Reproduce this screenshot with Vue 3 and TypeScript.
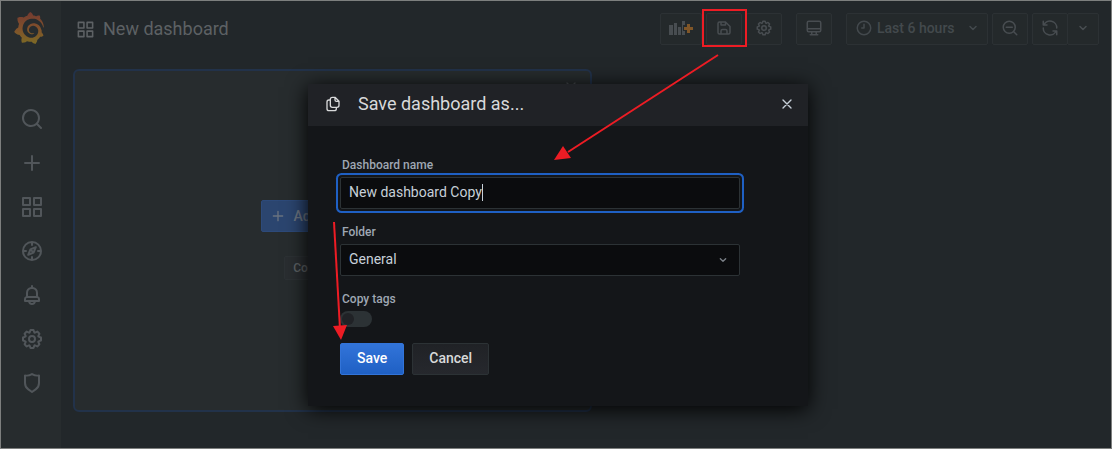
<script setup lang="ts">
import { h, ref, type FunctionalComponent } from 'vue'

interface Glyph {
  d: string
  line?: boolean
}

const glyphs: Record<string, Glyph> = {
  apps: { d: 'M10,13H3a1,1,0,0,0-1,1v7a1,1,0,0,0,1,1h7a1,1,0,0,0,1-1V14A1,1,0,0,0,10,13ZM9,20H4V15H9ZM21,2H14a1,1,0,0,0-1,1v7a1,1,0,0,0,1,1h7a1,1,0,0,0,1-1V3A1,1,0,0,0,21,2ZM20,9H15V4h5Zm1,4H14a1,1,0,0,0-1,1v7a1,1,0,0,0,1,1h7a1,1,0,0,0,1-1V14A1,1,0,0,0,21,13Zm-1,7H15V15h5ZM10,2H3A1,1,0,0,0,2,3v7a1,1,0,0,0,1,1h7a1,1,0,0,0,1-1V3A1,1,0,0,0,10,2ZM9,9H4V4H9Z' },
  search: { d: 'M21.71,20.29,18,16.61A9,9,0,1,0,16.61,18l3.68,3.68a1,1,0,0,0,1.42,0A1,1,0,0,0,21.71,20.29ZM11,18a7,7,0,1,1,7-7A7,7,0,0,1,11,18Z' },
  plus: { d: 'M19,11H13V5a1,1,0,0,0-2,0v6H5a1,1,0,0,0,0,2h6v6a1,1,0,0,0,2,0V13h6a1,1,0,0,0,0-2Z' },
  compass: { d: 'M12 3a9 9 0 1 0 0 18 9 9 0 0 0 0-18ZM12 3v3M12 18v3M3 12h3M18 12h3M15.8 8.2l-5.4 2.2-2.2 5.4 5.4-2.2ZM10.6 10.6l2.8 2.8', line: true },
  bell: { d: 'M18,13.18V10a6,6,0,0,0-5-5.91V3a1,1,0,0,0-2,0V4.09A6,6,0,0,0,6,10v3.18A3,3,0,0,0,4,16v2a1,1,0,0,0,1,1H8.14a4,4,0,0,0,7.72,0H19a1,1,0,0,0,1-1V16A3,3,0,0,0,18,13.18ZM8,10a4,4,0,0,1,8,0v3H8Zm4,10a2,2,0,0,1-1.72-1h3.44A2,2,0,0,1,12,20Zm6-3H6V16a1,1,0,0,1,1-1H17a1,1,0,0,1,1,1Z' },
  cog: { d: 'M21.32,9.55l-1.89-.63.89-1.78A1,1,0,0,0,20.13,6L18,3.87a1,1,0,0,0-1.15-.19l-1.78.89-.63-1.89A1,1,0,0,0,13.5,2h-3a1,1,0,0,0-.95.68L8.92,4.57,7.14,3.68A1,1,0,0,0,6,3.87L3.87,6a1,1,0,0,0-.19,1.15l.89,1.78-1.89.63A1,1,0,0,0,2,10.5v3a1,1,0,0,0,.68.95l1.89.63-.89,1.78A1,1,0,0,0,3.87,18L6,20.13a1,1,0,0,0,1.15.19l1.78-.89.63,1.89a1,1,0,0,0,.95.68h3a1,1,0,0,0,.95-.68l.63-1.89,1.78.89A1,1,0,0,0,18,20.13L20.13,18a1,1,0,0,0,.19-1.15l-.89-1.78,1.89-.63A1,1,0,0,0,22,13.5v-3A1,1,0,0,0,21.32,9.55ZM20,12.78l-1.2.4A2,2,0,0,0,17.64,16l.57,1.14-1.1,1.1L16,17.64a2,2,0,0,0-2.79,1.16l-.4,1.2H11.22l-.4-1.2A2,2,0,0,0,8,17.64l-1.14.57-1.1-1.1L6.36,16A2,2,0,0,0,5.2,13.18L4,12.78V11.22l1.2-.4A2,2,0,0,0,6.36,8L5.79,6.89l1.1-1.1L8,6.36A2,2,0,0,0,10.82,5.2l.4-1.2h1.56l.4,1.2A2,2,0,0,0,16,6.36l1.14-.57,1.1,1.1L17.64,8a2,2,0,0,0,1.16,2.79l1.2.4ZM12,8a4,4,0,1,0,4,4A4,4,0,0,0,12,8Zm0,6a2,2,0,1,1,2-2A2,2,0,0,1,12,14Z' },
  shield: { d: 'M19.63,3.65a1,1,0,0,0-.84-.2,8,8,0,0,1-6.22-1.27,1,1,0,0,0-1.14,0A8,8,0,0,1,5.21,3.45a1,1,0,0,0-.84.2A1,1,0,0,0,4,4.43v7.45a9,9,0,0,0,3.77,7.33l3.65,2.6a1,1,0,0,0,1.16,0l3.65-2.6A9,9,0,0,0,20,11.88V4.43A1,1,0,0,0,19.63,3.65ZM18,11.88a7,7,0,0,1-2.93,5.7L12,19.77,8.93,17.58A7,7,0,0,1,6,11.88V5.58a10,10,0,0,0,6-1.39,10,10,0,0,0,6,1.39Z' },
  save: { d: 'M20.71,9.29l-6-6a1,1,0,0,0-.32-.21A1.09,1.09,0,0,0,14,3H6A3,3,0,0,0,3,6V18a3,3,0,0,0,3,3H18a3,3,0,0,0,3-3V10A1,1,0,0,0,20.71,9.29ZM9,5h4V7H9Zm6,14H9V16a1,1,0,0,1,1-1h4a1,1,0,0,1,1,1Zm4-1a1,1,0,0,1-1,1H17V16a3,3,0,0,0-3-3H10a3,3,0,0,0-3,3v3H6a1,1,0,0,1-1-1V6A1,1,0,0,1,6,5H7V8A1,1,0,0,0,8,9h6a1,1,0,0,0,1-1V6.41l4,4Z' },
  monitor: { d: 'M5 3h14a2 2 0 0 1 2 2v10a2 2 0 0 1-2 2H5a2 2 0 0 1-2-2V5a2 2 0 0 1 2-2ZM3 13h18M9 17v4M15 17v4M7 21h10', line: true },
  clock: { d: 'M12 3a9 9 0 1 0 0 18 9 9 0 0 0 0-18ZM12 7v5H9', line: true },
  zoomOut: { d: 'M11 3a8 8 0 1 0 0 16 8 8 0 0 0 0-16ZM17 17l4 4M7 11h8', line: true },
  sync: { d: 'M3 3v5h5M3.800 8A9 9 0 0 1 21 12M21 21v-5h-5M20.200 16A9 9 0 0 1 3 12', line: true },
  down: { d: 'M8 10l4 4 4-4', line: true },
  times: { d: 'M6 6l12 12M18 6l-12 12', line: true },
  copy: { d: 'M15 2H11a3 3 0 0 0-3 3v9a3 3 0 0 0 3 3h7a3 3 0 0 0 3-3V8ZM15 2v4a2 2 0 0 0 2 2h4M8 6H6a3 3 0 0 0-3 3v10a3 3 0 0 0 3 3h8a3 3 0 0 0 3-3v-2', line: true },
}

const Icon: FunctionalComponent<{ name: string; size: number }> = (props) => {
  const glyph = glyphs[props.name]
  return h(
    'svg',
    { width: props.size, height: props.size, viewBox: '0 0 24 24', 'aria-hidden': 'true' },
    [
      h('path', {
        d: glyph.d,
        fill: glyph.line ? 'none' : 'currentColor',
        stroke: glyph.line ? 'currentColor' : 'none',
        'stroke-width': 2,
        'stroke-linecap': 'round',
        'stroke-linejoin': 'round',
      }),
    ],
  )
}
Icon.props = ['name', 'size']

const navItems = [
  { icon: 'search', label: 'Search' },
  { icon: 'plus', label: 'Create' },
  { icon: 'apps', label: 'Dashboards' },
  { icon: 'compass', label: 'Explore' },
  { icon: 'bell', label: 'Alerting' },
  { icon: 'cog', label: 'Configuration' },
  { icon: 'shield', label: 'Server Admin' },
]

const dashboardName = ref('New dashboard Copy')
const folder = ref('General')
const copyTags = ref(false)
</script>

<template>
  <div class="app">
    <nav class="sidebar" aria-label="Main">
      <a class="logo" href="#" aria-label="Grafana">
        <svg width="32" height="32" viewBox="0 0 24 24" aria-hidden="true">
          <defs>
            <linearGradient id="flame" x1="0" y1="1" x2="0" y2="0">
              <stop offset="0" stop-color="#7c6a25" />
              <stop offset="0.500" stop-color="#80502b" />
              <stop offset="1" stop-color="#733a30" />
            </linearGradient>
          </defs>
          <path fill="url(#flame)" d="M23.02 10.59a8.578 8.578 0 0 0-.862-3.034 8.911 8.911 0 0 0-1.789-2.445c.337-1.342-.413-2.505-.413-2.505-1.292-.08-2.113.4-2.416.62-.052-.02-.102-.044-.154-.064-.22-.089-.446-.172-.677-.247-.231-.073-.47-.14-.711-.197a9.867 9.867 0 0 0-.875-.161C14.557.753 12.94 0 12.94 0c-1.804 1.145-2.147 2.744-2.147 2.744l-.018.093c-.098.029-.2.057-.298.088-.138.042-.275.094-.413.143-.138.055-.275.107-.41.166a8.869 8.869 0 0 0-1.557.87l-.063-.029c-2.497-.955-4.716.195-4.716.195-.203 2.658.996 4.33 1.235 4.636a11.608 11.608 0 0 0-.607 2.635C1.636 12.677.953 15.014.953 15.014c1.926 2.214 4.171 2.351 4.171 2.351.003-.002.006-.002.006-.005.285.509.615.994.986 1.446.156.19.32.371.488.548-.704 2.009.099 3.68.099 3.68 2.144.08 3.553-.937 3.849-1.173a9.784 9.784 0 0 0 3.164.501h.08l.055-.003.107-.002.103-.005.003.002c1.01 1.44 2.788 1.646 2.788 1.646 1.264-1.332 1.337-2.653 1.337-2.94v-.058c0-.02-.003-.039-.003-.06.265-.187.52-.387.758-.6a7.875 7.875 0 0 0 1.415-1.7c1.43.083 2.437-.885 2.437-.885-.236-1.49-1.085-2.216-1.264-2.354l-.018-.013-.016-.013a.217.217 0 0 1-.031-.02c.008-.092.016-.18.02-.27.011-.162.016-.323.016-.48v-.253l-.005-.098-.008-.135a1.891 1.891 0 0 0-.01-.13c-.003-.042-.008-.083-.013-.125l-.016-.124-.018-.122a6.215 6.215 0 0 0-2.032-3.73 6.015 6.015 0 0 0-3.222-1.46 6.292 6.292 0 0 0-.85-.048l-.107.002h-.063l-.044.003-.104.008a4.777 4.777 0 0 0-3.335 1.695c-.332.4-.592.84-.768 1.297a4.594 4.594 0 0 0-.312 1.817l.003.091c.005.055.007.11.013.164a3.615 3.615 0 0 0 .698 1.82 3.53 3.53 0 0 0 1.827 1.282c.33.098.66.14.971.137.039 0 .078 0 .114-.002l.063-.003c.02 0 .041-.003.062-.003.034-.002.065-.007.099-.01.007 0 .018-.003.028-.003l.031-.005.06-.008a1.18 1.18 0 0 0 .112-.02c.036-.008.072-.013.109-.024a2.634 2.634 0 0 0 .914-.415c.028-.02.056-.041.085-.065a.248.248 0 0 0 .039-.35.244.244 0 0 0-.309-.06l-.078.042c-.09.044-.184.083-.283.116a2.476 2.476 0 0 1-.475.096c-.028.003-.054.006-.083.006l-.083.002c-.026 0-.054 0-.08-.002l-.102-.006h-.012l-.024.006c-.016-.003-.031-.003-.044-.006-.031-.002-.06-.007-.091-.01a2.59 2.59 0 0 1-.724-.213 2.557 2.557 0 0 1-.667-.438 2.52 2.52 0 0 1-.805-1.475 2.306 2.306 0 0 1-.029-.444l.006-.122v-.023l.002-.031c.003-.021.003-.04.005-.06a3.163 3.163 0 0 1 1.352-2.29 3.12 3.12 0 0 1 .937-.43 2.946 2.946 0 0 1 .776-.101h.06l.07.002.045.003h.026l.07.005a4.041 4.041 0 0 1 1.635.49 3.94 3.94 0 0 1 1.602 1.662 3.77 3.77 0 0 1 .397 1.414l.005.076.003.075c.002.026.002.05.002.075 0 .024.003.052 0 .07v.065l-.002.073-.008.174a6.195 6.195 0 0 1-.08.639 5.1 5.1 0 0 1-.267.927 5.31 5.31 0 0 1-.624 1.13 5.052 5.052 0 0 1-3.237 2.014 4.82 4.82 0 0 1-.649.066l-.039.003h-.287a6.607 6.607 0 0 1-1.716-.265 6.776 6.776 0 0 1-3.4-2.274 6.75 6.75 0 0 1-.746-1.15 6.616 6.616 0 0 1-.714-2.596l-.005-.083-.002-.02v-.056l-.003-.073v-.096l-.003-.104v-.07l.003-.163c.008-.22.026-.45.054-.678a8.707 8.707 0 0 1 .28-1.355c.128-.444.286-.872.473-1.277a7.04 7.04 0 0 1 1.456-2.1 5.925 5.925 0 0 1 .953-.763c.169-.111.343-.213.524-.306.089-.05.182-.091.273-.135.047-.02.093-.042.138-.062a7.177 7.177 0 0 1 .714-.267l.145-.045c.049-.015.098-.026.148-.041.098-.029.197-.052.296-.076.049-.013.1-.02.15-.033l.15-.032.151-.028.076-.013.075-.01.153-.024c.057-.01.114-.013.171-.023l.169-.021c.036-.003.073-.008.106-.01l.073-.008.036-.003.042-.002c.057-.003.114-.008.171-.01l.086-.006h.023l.037-.003.145-.007a7.999 7.999 0 0 1 1.708.125 7.917 7.917 0 0 1 2.048.68 8.253 8.253 0 0 1 1.672 1.09l.09.077.089.078c.06.052.114.107.171.159.057.052.112.106.166.16.052.055.107.107.159.164a8.671 8.671 0 0 1 1.41 1.978c.012.026.028.052.04.078l.04.078.075.156c.023.051.05.1.07.153l.065.15a8.848 8.848 0 0 1 .45 1.34.19.19 0 0 0 .201.142.186.186 0 0 0 .172-.184c.01-.246.002-.532-.024-.856z" />
        </svg>
      </a>
      <a v-for="item in navItems" :key="item.label" class="nav-item" href="#" :aria-label="item.label">
        <Icon :name="item.icon" :size="24" />
      </a>
    </nav>

    <main class="main">
      <header class="toolbar">
        <Icon name="apps" :size="19" />
        <h1 class="page-title">New dashboard</h1>
        <div class="actions">
          <div class="group">
            <button class="tool tool-add" type="button" aria-label="Add panel">
              <svg width="26" height="16" viewBox="0 0 26 16" aria-hidden="true">
                <path fill="currentColor" d="M1 5h4v10H1zM6 3h3v12H6zM10 7h3v8h-3zM14 1h3v4h-2v6h2v4h-3z" />
                <path fill="#805628" d="M19 4h3v3h3v3h-3v3h-3v-3h-3V7h3z" />
              </svg>
            </button>
            <button class="tool tool-marked" type="button" aria-label="Save dashboard">
              <Icon name="save" :size="18" />
            </button>
            <button class="tool" type="button" aria-label="Dashboard settings">
              <Icon name="cog" :size="18" />
            </button>
          </div>
          <button class="tool" type="button" aria-label="Cycle view mode">
            <Icon name="monitor" :size="18" />
          </button>
          <div class="group">
            <button class="tool tool-time" type="button">
              <Icon name="clock" :size="18" />
              <span>Last 6 hours</span>
              <Icon name="down" :size="18" />
            </button>
            <button class="tool" type="button" aria-label="Zoom out">
              <Icon name="zoomOut" :size="18" />
            </button>
            <div class="joined">
              <button class="tool" type="button" aria-label="Refresh">
                <Icon name="sync" :size="18" />
              </button>
              <button class="tool tool-narrow" type="button" aria-label="Refresh interval">
                <Icon name="down" :size="18" />
              </button>
            </div>
          </div>
        </div>
      </header>

      <section class="panel" aria-label="Add panel">
        <button class="panel-close" type="button" aria-label="Remove panel">
          <Icon name="times" :size="16" />
        </button>
        <button class="add-panel" type="button">
          <Icon name="plus" :size="16" />
          <span>Add new panel</span>
        </button>
        <button class="convert" type="button">Convert to row</button>
      </section>
    </main>

    <div class="backdrop">
      <div class="modal" role="dialog" aria-labelledby="modal-title">
        <header class="modal-header">
          <Icon name="copy" :size="16" />
          <h2 id="modal-title" class="modal-title">Save dashboard as...</h2>
          <button class="modal-close" type="button" aria-label="Close">
            <Icon name="times" :size="16" />
          </button>
        </header>
        <form class="modal-body" @submit.prevent>
          <label class="label" for="name">Dashboard name</label>
          <div class="control">
            <input id="name" v-model="dashboardName" class="field field-active" type="text" autocomplete="off" spellcheck="false" />
            <span class="caret" aria-hidden="true"></span>
          </div>
          <label class="label" for="folder">Folder</label>
          <div class="control">
            <select id="folder" v-model="folder" class="field">
              <option>General</option>
            </select>
            <Icon name="down" :size="16" />
          </div>
          <label class="label" for="tags">Copy tags</label>
          <input id="tags" v-model="copyTags" class="switch" type="checkbox" />
          <div class="buttons">
            <button class="btn btn-primary" type="submit">Save</button>
            <button class="btn btn-secondary" type="button">Cancel</button>
          </div>
        </form>
      </div>
    </div>

    <svg class="arrows" width="420" height="300" viewBox="0 0 420 300" aria-hidden="true">
      <g stroke="#ed1c24" stroke-width="2" fill="none">
        <path d="M388 10L238 107" />
        <path d="M4 177L10 284" />
      </g>
      <g fill="#ed1c24">
        <path d="M224 115L233 101L241 113Z" />
        <path d="M11 295L3 281L17 280Z" />
      </g>
    </svg>
  </div>
</template>

<style>
body {
  margin: 0;
  background: #22272a;
}
</style>

<style scoped>
.app {
  position: relative;
  box-sizing: border-box;
  display: grid;
  grid-template-columns: 60px 1fr;
  min-height: 100vh;
  border: 1px solid #7d7f7e;
  background: #22272a;
  color: #5d6164;
  font-family: Roboto, "Liberation Sans", sans-serif;
  font-size: 14px;
  line-height: 20px;
}

svg {
  display: block;
  flex: none;
}

button,
input,
select {
  box-sizing: border-box;
  margin: 0;
  font: inherit;
}

.sidebar {
  display: flex;
  flex-direction: column;
  align-items: center;
  background: #272c2e;
  color: #51565a;
}

.logo {
  margin: 11px 4px 53px 0;
}

.nav-item {
  display: flex;
  align-items: center;
  justify-content: center;
  width: 60px;
  height: 44px;
  padding-left: 2px;
  box-sizing: border-box;
  color: inherit;
}

.main {
  display: flex;
  flex-direction: column;
  min-width: 0;
  padding: 12px 12px 36px;
}

.toolbar {
  display: flex;
  align-items: center;
  height: 32px;
  margin-bottom: 24px;
  padding-left: 3px;
}

.page-title {
  margin: 0 auto 0 8px;
  font-size: 18px;
  font-weight: 400;
  line-height: 24px;
}

.actions {
  display: flex;
  gap: 14px;
}

.group {
  display: flex;
  gap: 4px;
}

.joined {
  display: flex;
}

.tool {
  display: flex;
  align-items: center;
  justify-content: center;
  width: 36px;
  height: 32px;
  padding: 0 0 2px;
  border: 1px solid #2c3134;
  border-radius: 2px;
  background: #24292b;
  color: #484d51;
}

.tool-add {
  width: 42px;
}

.tool-marked {
  position: relative;
}

.tool-marked::after {
  content: "";
  position: absolute;
  z-index: 1;
  inset: -5px -6px -3px -5px;
  border: 2px solid #ed1c24;
}

.tool-time {
  width: 142px;
  justify-content: flex-start;
  gap: 4px;
  padding: 0 5px 2px 8px;
  font-weight: 500;
  color: #43494d;
}

.tool-time svg:last-child {
  margin-left: auto;
}

.tool-narrow {
  width: 32px;
  margin-left: -1px;
}

.panel {
  position: relative;
  box-sizing: border-box;
  display: flex;
  flex: 1;
  flex-direction: column;
  align-items: center;
  justify-content: center;
  gap: 24px;
  width: calc(50% + 6px);
  padding-bottom: 2px;
  border: 2px solid #22324a;
  border-radius: 6px;
  background: #272c2e;
}

.panel-close {
  position: absolute;
  top: 8px;
  right: 11px;
  padding: 0;
  border: 0;
  background: none;
  color: #484d51;
}

.add-panel {
  display: flex;
  align-items: center;
  gap: 8px;
  width: 144px;
  height: 32px;
  padding: 0 8px;
  border: 1px solid #2d4a7a;
  border-radius: 2px;
  background: #2b456f;
  color: #6a7380;
  font-weight: 500;
}

.convert {
  width: 98px;
  height: 24px;
  padding: 0;
  border: 1px solid #2c3134;
  border-radius: 2px;
  background: #292d30;
  color: #5d6164;
  font-size: 12px;
  font-weight: 500;
}

.backdrop {
  position: absolute;
  inset: 0;
  display: flex;
  align-items: flex-start;
  justify-content: center;
  padding: 83px 0 0 4px;
}

.modal {
  width: 500px;
  background: #141619;
  box-shadow: 0 3px 20px #000000;
}

.modal-header {
  display: flex;
  align-items: center;
  box-sizing: border-box;
  height: 42px;
  padding: 0 13px 2px 17px;
  background: #202226;
  color: #d8d9da;
}

.modal-title {
  margin: 0 auto 0 17px;
  font-size: 18px;
  font-weight: 400;
  line-height: 24px;
}

.modal-close {
  padding: 0;
  border: 0;
  background: none;
  color: #c7d0d9;
}

.modal-body {
  display: flex;
  flex-direction: column;
  align-items: flex-start;
  padding: 31px 68px 31px 32px;
}

.label {
  height: 16px;
  margin-bottom: 4px;
  padding-left: 2px;
  color: #9fa7b3;
  font-size: 12px;
  font-weight: 500;
  line-height: 16px;
}

.control {
  position: relative;
  width: 100%;
  margin-bottom: 15px;
}

.field {
  display: block;
  width: 100%;
  height: 32px;
  padding: 0 8px 2px;
  border: 1px solid #2c3235;
  border-radius: 2px;
  outline: 0;
  background: #0b0c0e;
  color: #c7d0d9;
  appearance: none;
}

.field-active {
  box-shadow: 0 0 0 2px #141619, 0 0 0 4px #1f60c4;
}

.caret {
  position: absolute;
  top: 7px;
  left: 142px;
  width: 1px;
  height: 17px;
  background: #c7d0d9;
}

.field-active:focus + .caret {
  display: none;
}

.control svg {
  position: absolute;
  top: 8px;
  right: 9px;
  color: #7b8087;
  pointer-events: none;
}

.switch {
  position: relative;
  width: 32px;
  height: 16px;
  border-radius: 8px;
  background: #2c3235;
  appearance: none;
}

.switch::before {
  content: "";
  position: absolute;
  top: 2px;
  left: 2px;
  width: 12px;
  height: 12px;
  border-radius: 6px;
  background: #202226;
}

.switch:checked::before {
  left: 18px;
}

.buttons {
  display: flex;
  gap: 8px;
  margin-top: 16px;
}

.btn {
  height: 32px;
  padding: 0 16px 2px;
  border-radius: 2px;
  font-weight: 500;
}

.btn-primary {
  border: 1px solid #3274d9;
  background: linear-gradient(#3274d9, #1f60c4);
  color: #ffffff;
}

.btn-secondary {
  border: 1px solid #2c3235;
  background: linear-gradient(#202226, #26282d);
  color: #d8d9da;
}

.arrows {
  position: absolute;
  top: 44px;
  left: 329px;
  pointer-events: none;
}
</style>
